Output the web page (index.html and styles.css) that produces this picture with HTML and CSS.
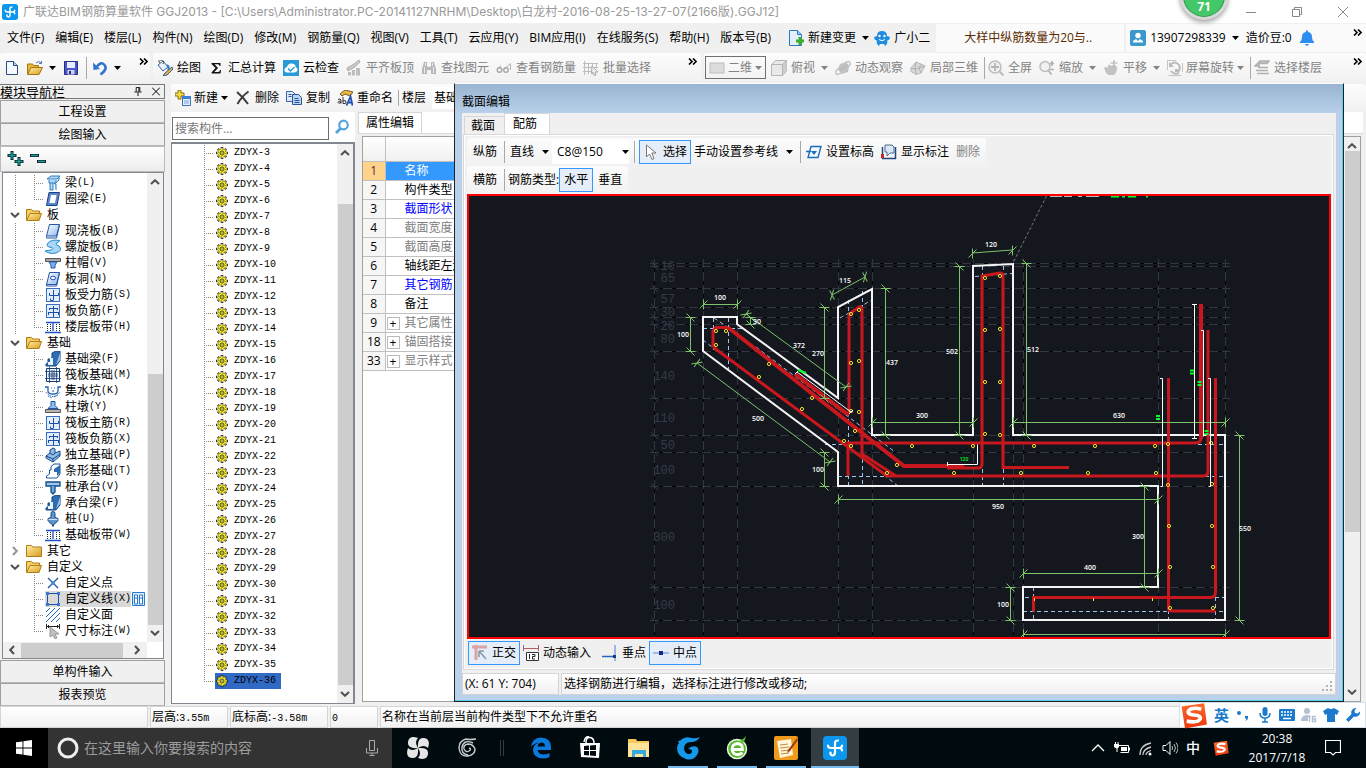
FILE: index.html
```html
<!DOCTYPE html>
<html lang="zh-CN">
<head>
<meta charset="utf-8">
<title>广联达BIM钢筋算量软件 GGJ2013</title>
<link rel="stylesheet" href="styles.css">
</head>
<body>
<svg class="defs" aria-hidden="true">
  <defs>
    <linearGradient id="gFold" x1="0" y1="0" x2="1" y2="1"><stop offset="0" stop-color="#fff0a8"/><stop offset="1" stop-color="#d99a1c"/></linearGradient>
    <linearGradient id="gBlue" x1="0" y1="0" x2="1" y2="1"><stop offset="0" stop-color="#ffffff"/><stop offset="1" stop-color="#8db8ee"/></linearGradient>
    <linearGradient id="gOrange" x1="0" y1="0" x2="0" y2="1"><stop offset="0" stop-color="#ff6a2e"/><stop offset="1" stop-color="#e8380d"/></linearGradient>
  </defs>
  <symbol id="caret" viewBox="0 0 7 4"><path d="M0 0h7L3.500 4z" fill="currentColor"/></symbol>
  <symbol id="more" viewBox="0 0 9 7"><path d="M1 .5 4 3.500 1 6.500M5 .5 8 3.500 5 6.500" fill="none" stroke="currentColor" stroke-width="1.600"/></symbol>
  <symbol id="up" viewBox="0 0 10 6"><path d="M1 5 5 1.200 9 5" fill="none" stroke="#505050" stroke-width="2"/></symbol>
  <symbol id="down" viewBox="0 0 10 6"><path d="M1 1 5 4.800 9 1" fill="none" stroke="#505050" stroke-width="2"/></symbol>
  <symbol id="left" viewBox="0 0 6 10"><path d="M5 1 1.200 5 5 9" fill="none" stroke="#505050" stroke-width="2"/></symbol>
  <symbol id="right" viewBox="0 0 6 10"><path d="M1 1 4.800 5 1 9" fill="none" stroke="#505050" stroke-width="2"/></symbol>
  <symbol id="app" viewBox="0 0 24 24"><rect width="24" height="24" rx="4" fill="#0d96ee"/><path d="M12 9V7q0-2.500 3-2.500M12 8v8q0 3.500-2.500 3.500Q7 19 7.500 16.500M5 9.500q0 2.500 3 2.500h8q3 0 3 2.500M19 9.500q0 2.500-3 2.500" fill="none" stroke="#fff" stroke-width="2.200" stroke-linecap="round"/></symbol>
  <symbol id="newfile" viewBox="0 0 16 16"><path d="M2.500 1.500h7l4 4v9h-11z" fill="#f4f8ff" stroke="#2c4a7c"/><path d="M9.500 1.500v4h4" fill="#b8cff0" stroke="#2c4a7c"/></symbol>
  <symbol id="open" viewBox="0 0 16 16"><path d="M.5 14V4h5l1 1.500h5V8" fill="#e6b83a" stroke="#a87410"/><path d="M.5 14.500 4 7.500h11.500L12 14.500z" fill="url(#gFold)" stroke="#a87410"/><path d="M9 3q3-3 5 0m.5-2v2.500H12" fill="none" stroke="#4a78b0"/></symbol>
  <symbol id="save" viewBox="0 0 16 16"><path d="M1.500 1.500h13v13h-13z" fill="#4b57c8" stroke="#262e8c"/><path d="M4 2h8v6H4z" fill="#e8ecff"/><path d="M4.500 10h7v4.500h-7z" fill="#cfd4e8"/><path d="M6 11h2v3H6z" fill="#262e8c"/></symbol>
  <symbol id="undo" viewBox="0 0 16 16"><path d="M5 6.500Q9 1 12.500 5t-4 9.500" fill="none" stroke="#3272d2" stroke-width="2.600"/><path d="M1 2.500 8 9 1.500 10z" fill="#3272d2"/></symbol>
  <symbol id="draw" viewBox="0 0 16 16"><path d="m1 5 5-4 5 6-5 4z" fill="#e9f1fb" stroke="#3a5f94"/><path d="M3 3q-3-3 1-3t2 4" fill="none" stroke="#444"/><path d="M10 5q3 2 1 5" fill="none" stroke="#2b7fd6" stroke-width="2"/><path d="m15 7-7 6-2 3 4-1 6-6z" fill="#e6b23a" stroke="#375c92"/></symbol>
  <symbol id="sigma" viewBox="0 0 16 16"><path d="M3.500 3h9v3h-1q0-1.800-1.500-1.800H6.500L10 8l-3.700 4H10q2 0 2-2h1l-.5 3.500h-9v-1L7.500 8 3.500 4z" fill="#111"/></symbol>
  <symbol id="cloud" viewBox="0 0 16 16"><rect width="16" height="16" fill="#2a9ad6"/><path d="M4 12.500q-3-.5-2.500-3T4 7q1-4 5-3.500T12.500 7Q15 8 14.500 10t-3 2.500z" fill="#fff"/><path d="m5 8.500 2.500 2.500L11.500 7" fill="none" stroke="#2a9ad6" stroke-width="1.500"/></symbol>
  <symbol id="align" viewBox="0 0 16 16"><path d="M1 8 8 4l5-4 1 2-5 5-7 4z" fill="#c9c9c9" stroke="#b0b0b0"/><path d="M2 12h3v3.500H2zM6 10h3v5.500H6zM10 8h4v7.500h-4z" fill="#bdbdbd"/></symbol>
  <symbol id="find" viewBox="0 0 16 16"><path d="M3 2h3v4l1 1h2l1-1V2h3l2 7v5h-5v-4H6v4H1V9z" fill="#b8b8b8"/><path d="M3.500 7v6M12.500 7v6M4.500 3v3M11.500 3v3" stroke="#ececec"/></symbol>
  <symbol id="glasses" viewBox="0 0 16 16"><path d="M1 9 5 5.500M8.500 9 14.500 3.500V10" fill="none" stroke="#b0b0b0"/><circle cx="3.500" cy="10" r="2.300" fill="none" stroke="#a8a8a8" stroke-width="1.400"/><circle cx="10" cy="10" r="2.300" fill="none" stroke="#a8a8a8" stroke-width="1.400"/></symbol>
  <symbol id="batch" viewBox="0 0 16 16"><path d="M1.500 1v14M5.500 3v11M9.500 3v11M13.500 3v4M0 3.500h15M0 7.500h15M0 11.500h9" stroke="#bdbdbd" fill="none"/><path d="m9 6 6 6h-3l1 3-2 .5-1-3-1.500 1z" fill="#eee" stroke="#a8a8a8"/></symbol>
  <symbol id="plane2d" viewBox="0 0 16 16"><rect x="1" y="3" width="14" height="10" fill="#dcdcdc" stroke="#bdbdbd"/></symbol>
  <symbol id="cube" viewBox="0 0 16 16"><path d="M.5 4.500 4.500.5h11v11l-4 4H.5z" fill="#e8e8e8" stroke="#b5b5b5"/><path d="m11.500 4.500 4-4v11l-4 4z" fill="#cdcdcd"/><path d="M.5 4.500h11v11M11.500 4.500l4-4" fill="none" stroke="#b5b5b5"/></symbol>
  <symbol id="orbit" viewBox="0 0 16 16"><path d="m5 4 6-2 3 4-1 6-7 2-3-5z" fill="#bdbdbd"/><ellipse cx="8" cy="8" rx="9" ry="3" transform="rotate(-40 8 8)" fill="none" stroke="#c8c8c8" stroke-width="1.500"/></symbol>
  <symbol id="part3d" viewBox="0 0 16 16"><path d="m1 8 5-6 5 2 4 2-4 7-5 1.500-5-3z" fill="#d8d8d8" stroke="#b8b8b8"/><path d="m6 2-1 6 1 6M11 4 9 8l2 5M1 8l4 1 4-1 6-2" fill="none" stroke="#b0b0b0"/></symbol>
  <symbol id="full" viewBox="0 0 16 16"><circle cx="7" cy="7" r="6" fill="#f0f0f0" stroke="#bdbdbd" stroke-width="1.500"/><path d="M7 3v8M3 7h8M11.500 11.500l4 4" stroke="#b5b5b5" stroke-width="1.800"/></symbol>
  <symbol id="zoomi" viewBox="0 0 16 16"><circle cx="6" cy="6.500" r="5" fill="#f0f0f0" stroke="#bdbdbd" stroke-width="1.500"/><path d="m9.500 10.500 3 4M13 1v5M11 3.500h4M11 9.500h4" stroke="#b0b0b0" stroke-width="1.600"/></symbol>
  <symbol id="pan" viewBox="0 0 16 16"><path d="M1 8q2-2 4 0V5q2-1 3 1 4-2 6 1 0 6-3 8H5q-3-3-4-7z" fill="#c2c2c2"/><path d="M11 0v7M7.500 3h7" stroke="#b0b0b0" stroke-width="1.200"/></symbol>
  <symbol id="rotate" viewBox="0 0 16 16"><path d="M.5 10V.5h9M1.500 15.500h13M15.500 3v9" fill="none" stroke="#c4c4c4"/><path d="M3 5q5-5 9 0 2 4-1 7M12 13q-5 2-8-2" fill="none" stroke="#bababa" stroke-width="2"/><path d="M2 2v5h5zM8 9h3v3H8z" fill="#bababa"/></symbol>
  <symbol id="floors" viewBox="0 0 16 16"><path d="m1 6 5-5h9l-2 2.500H5V6zM4 7.500h10M2 10.500h12M3 13.500h12" fill="#c4c4c4" stroke="#b0b0b0" stroke-width="1.500"/></symbol>
  <symbol id="change" viewBox="0 0 16 16"><path d="M1.500.500h8l4 4v11h-12z" fill="#e3f0fc" stroke="#2a78c0"/><path d="M9.500.500v4h4" fill="#9cc5ee" stroke="#2a78c0"/><path d="M8 9.500h2.500V7h3v2.500H16v3h-2.500V15h-3v-2.500H8z" fill="#3fae2c"/></symbol>
  <symbol id="robot" viewBox="0 0 16 16"><path d="M3 6q0-5 5-5t5 5l3 1-1 3h-1.500L13 14l-2 2-1-2H6l-1 2-2-2-.5-4H1L0 7z" fill="#1e8ce0"/><circle cx="5.500" cy="6" r="1.200" fill="#fff"/><circle cx="10.500" cy="6" r="1.200" fill="#fff"/><path d="M5 9.500q3 2.500 6 0" stroke="#fff" fill="none"/></symbol>
  <symbol id="user" viewBox="0 0 16 16"><rect width="16" height="16" rx="2" fill="#3a99cc"/><circle cx="8" cy="5.500" r="2.700" fill="#fff"/><path d="M3 12.500V11l3-2 2 2 2-2 3 2v1.500z" fill="#fff"/></symbol>
  <symbol id="bell" viewBox="0 0 16 16"><path d="M7 .5h2V2q4 .5 4 5 0 3 2 5v1H1v-1q2-2 2-5 0-4.500 4-5zM5.500 14h5L8 16z" fill="#2d8cf0"/></symbol>
  <symbol id="add" viewBox="0 0 16 16"><path d="M3 0h3v3h3v3H6v3H3V6H0V3h3z" fill="#f5d94a" stroke="#8a7010"/><path d="M7.500 6.500h8v9h-8z" fill="#e8f1fc" stroke="#3a6fb8"/><path d="M7 6h9v3H7z" fill="#3a7fd8"/><path d="M9 11h5M9 13h5" stroke="#6fa3e0"/></symbol>
  <symbol id="del" viewBox="0 0 16 16"><path d="M2 2q6 5 11 12M13.500 1.500Q7 6 2.500 14" fill="none" stroke="#3c3c3c" stroke-width="2"/></symbol>
  <symbol id="copy" viewBox="0 0 16 16"><path d="M.5 1.500h6l3 3v7h-9z" fill="#dce9fa" stroke="#3a66a8"/><path d="M6.500 4.500h6l3 3v7h-9z" fill="#b9d4f6" stroke="#2c5596"/><path d="M8.500 8.500h4M8.500 10.500h5M8.500 12.500h5M2.500 4.500h3M2.500 6.500h3" stroke="#2c5596"/></symbol>
  <symbol id="rename" viewBox="0 0 16 16"><path d="m3 4 5-4 8 2-3 4-5-2-3 2z" fill="#e8b848" stroke="#7a5a18"/><path d="M1 9.500q3-1.500 3 1v3M4 11q-3 0-3 1.500t3 0M6 7v6.500q3 1 3-1.500T6 11" fill="none" stroke="#333"/><path d="m9.500 15.500 4-9 2 9M11 12.500h4" fill="none" stroke="#2050b0" stroke-width="1.800"/></symbol>
  <symbol id="mag" viewBox="0 0 16 16"><circle cx="9.500" cy="6" r="4.300" fill="#fff" stroke="#55a5e0" stroke-width="2.200"/><path d="M6.500 9.500 2 14" stroke="#55a5e0" stroke-width="3"/></symbol>
  <symbol id="gear" viewBox="0 0 12 12"><path d="M6 0v12M0 6h12M1.800 1.800l8.400 8.400M10.200 1.800l-8.400 8.400" stroke="#333" stroke-width="2.600"/><circle cx="6" cy="6" r="4.300" fill="#f3ea20"/><path d="M6 1v10M1 6h10M2.500 2.500l7 7M9.500 2.500l-7 7" stroke="#f3ea20" stroke-width="1.400"/><circle cx="6" cy="6" r="2" fill="#f5ee30" stroke="#444"/><circle cx="6" cy="6" r="3.800" fill="none" stroke="#444" stroke-dasharray="1 2" stroke-width=".8"/><rect x="5.500" y="5.500" width="1" height="1" fill="#222"/></symbol>
  <symbol id="fopen" viewBox="0 0 16 16"><path d="M.5 13V2.500h5L7 4h6.500v3" fill="#f3cf62" stroke="#b07c14"/><path d="M.5 13.500 4 6.500h11.500L13 13.500z" fill="url(#gFold)" stroke="#b07c14"/></symbol>
  <symbol id="fclosed" viewBox="0 0 16 16"><path d="M.5 13.500v-11h5L7 4h8.500v9.500z" fill="url(#gFold)" stroke="#b07c14"/></symbol>
  <symbol id="beam" viewBox="0 0 16 16"><path d="m2 4 4-3h9l-3 3zM4 5v3h7V5M5 8v7h3V8M11 8l3-3v-3M9 8l2 1v6" fill="#b9d4f4" stroke="#2b82c4"/></symbol>
  <symbol id="ring" viewBox="0 0 16 16"><path d="M4 1.500h10.500L12 14.500H1.500z" fill="#5a86cc" stroke="#1a3f86"/><path d="M6 4h5.500L10 12H4.500z" fill="#fff"/></symbol>
  <symbol id="slab" viewBox="0 0 16 16"><path d="M4.500 1.500h10L11.500 13h-10z" fill="url(#gBlue)" stroke="#2455a6"/><path d="M1.500 13.500v1.500h10l3-13" fill="none" stroke="#2455a6"/></symbol>
  <symbol id="spiral" viewBox="0 0 16 16"><path d="M15 1.500Q6 0 3 4t4 4.500q2 1-1 2.500l-6 1q6 4 12 1.500t2-6.500Q9 5 12 4z" fill="#a7d6f6" stroke="#1f8bd0"/></symbol>
  <symbol id="cap" viewBox="0 0 16 16"><path d="M.5 3.500h15v3H.5z" fill="#a8a8a8" stroke="#555"/><path d="M4 7h8l-2 3v3H6v-3z" fill="#7db4ee" stroke="#1e5aa8"/></symbol>
  <symbol id="hole" viewBox="0 0 16 16"><path d="M4.500 1.500h10L11.500 13.500h-10z" fill="url(#gBlue)" stroke="#2455a6"/><path d="M1.500 13.500v1.500h10l3-13" fill="none" stroke="#2455a6"/><ellipse cx="8" cy="7" rx="2.500" ry="1.800" fill="#fff" stroke="#1a4ac0"/></symbol>
  <symbol id="rebar" viewBox="0 0 16 16"><rect x="1.500" y="1.500" width="13" height="13" fill="#e2ecfa" stroke="#3a70c0"/><path d="M8.500 3v10.500M4.500 6v2.500h9V6M8 13.500H5.500v-2" fill="none" stroke="#1c50a8"/></symbol>
  <symbol id="rebar2" viewBox="0 0 16 16"><rect x="1.500" y="1.500" width="13" height="13" fill="#e2ecfa" stroke="#3a70c0"/><path d="M8.500 3v11M4 5.500h9M3 9.500h11M4.500 5v2M12.500 5v2M3.500 10v2M13.500 10v2" fill="none" stroke="#1c50a8"/></symbol>
  <symbol id="strip" viewBox="0 0 16 16"><path d="M1 3.500h4M11 3.500h4M5 3.500h6M0 13.500h16M8 4v8" stroke="#1c50c8" stroke-width="1.300"/><path d="M2.500 5v7M5.500 5v7M11.500 5v7M14.500 5v7" stroke="#222" stroke-dasharray="1 1"/></symbol>
  <symbol id="fbeam" viewBox="0 0 16 16"><path d="M7 6V2l4-2h4v10l-4 5H1v-2l2-1V8h3z" fill="#2d6cb0" stroke="#17457c"/><path d="M3 14v-3h2V7h3v7z" fill="#e8f2fd"/><path d="m11 14 4-5V2" fill="#9cc2ea"/></symbol>
  <symbol id="raft" viewBox="0 0 16 16"><path d="M1.500 1.500h13v13h-13z" fill="#e8f1fa" stroke="#173c70"/><path d="M4.500 0v16M11.500 0v16M0 4.500h16M0 11.500h16M7 3v10M9 3v10M3 7h10M3 9h10" stroke="#173c70" stroke-width=".8"/></symbol>
  <symbol id="pit" viewBox="0 0 16 16"><path d="M0 4h3v4q0 3 5 3t5-3V4h3" fill="none" stroke="#1f5fb4" stroke-width="1.300"/><path d="M1 9q7 9 14 0M3 13l4 2M9 14l4-2" fill="none" stroke="#1f5fb4" stroke-dasharray="1.500 1"/><path d="M6 5h1M9 5h1M7 8h2" stroke="#1f5fb4"/></symbol>
  <symbol id="pier" viewBox="0 0 16 16"><path d="M6 2.500h4v4l3 3H3l3-3z" fill="#8ebdf0" stroke="#1e5aa8"/><path d="M.5 10.500h15v3H.5z" fill="#b5b5b5" stroke="#555"/></symbol>
  <symbol id="found" viewBox="0 0 16 16"><path d="m1 9 4-3V3l3-2 2 1v4l5-2v5l-7 6-7-4z" fill="#8fbbe8" stroke="#174a86"/><path d="m1 9 7 3 7-5M8 12v3M5 6l3 2 2-2" fill="none" stroke="#174a86"/></symbol>
  <symbol id="footing" viewBox="0 0 16 16"><path d="M6 3.500 9 1h6v10l-3 4H1.500v-2l3-2V7H6z" fill="#fff" stroke="#1c58a0"/><path d="M9 6l6-4v8l-3 3V9H9z" fill="#2d6cb0"/></symbol>
  <symbol id="pilecap" viewBox="0 0 16 16"><path d="M1 3h14v4H1z" fill="#9cc8ee" stroke="#134b86" stroke-width="1.300"/><path d="M6 7v6l2 2 2-2V7" fill="#6da9dc" stroke="#134b86" stroke-width="1.300"/></symbol>
  <symbol id="pile" viewBox="0 0 16 16"><path d="M8 .5q2 0 2 2v4l3 1v2q-2 3-3.500 3L8 15.500 6.500 12.500Q5 12.500 3 9.500v-2l3-1v-4q0-2 2-2z" fill="#5f95cc" stroke="#174a86"/><path d="M3.500 8.500h9" stroke="#cfe4f8"/></symbol>
  <symbol id="cpoint" viewBox="0 0 16 16"><path d="m3 3 10 10M13 3 3 13" stroke="#1c50a8" stroke-width="1.200"/><circle cx="8" cy="8" r="2" fill="#4a90e0"/></symbol>
  <symbol id="cline" viewBox="0 0 16 16"><path d="M2.500 2.500h11v11h-11z" fill="none" stroke="#1c50a8"/><path d="M1 1h3v3H1zM12 1h3v3h-3zM1 12h3v3H1zM12 12h3v3h-3z" fill="#3a78d0"/></symbol>
  <symbol id="cface" viewBox="0 0 16 16"><path d="M1 5 5 1M1 10 10 1M1 15 15 1M6 15l9-9M11 15l4-4" stroke="#2468c0"/></symbol>
  <symbol id="dimen" viewBox="0 0 16 16"><path d="M1.500 1v5M14.500 1v5M1 3.500h14M3.500 2v3M12.500 2v3" stroke="#222"/><path d="m5 4 9 7h-4l2 4-2 1-2-4-3 2z" fill="#c0c0c0" stroke="#999"/></symbol>
  <symbol id="arrow" viewBox="0 0 16 16"><path d="M3.500 1v12l3-3 2.500 5.500 2-1L8.800 9H13z" fill="#fff" stroke="#777"/></symbol>
  <symbol id="level" viewBox="0 0 16 16"><path d="M5 2.500h10l-3 11H2zM0 7.500h5" fill="#f2f8ff" stroke="#1c6cb8" stroke-width="1.400"/><path d="M5 7h6L8 11z" fill="#1c6cb8"/></symbol>
  <symbol id="showdim" viewBox="0 0 16 16"><path d="M1.500 3v12M14.500 3v12M1 14.500h14" stroke="#23477c" stroke-width="1.500"/><path d="M4 1h7l2 2v6H9l-3 3V8H4z" fill="#dbe7f6" stroke="#4c6a94"/><path d="M0 10h3v4H0z" fill="#c62828"/></symbol>
  <symbol id="ortho" viewBox="0 0 16 16"><path d="M0 2h15M4 0v15" stroke="#dba4a4" stroke-width="3"/><path d="m7 6 7 8M7 6v6M7 6h5" stroke="#8899a8" stroke-width="1.600"/></symbol>
  <symbol id="dyn" viewBox="0 0 16 16"><path d="M.5 0v6M15.500 0v6M0 3.500h16" stroke="#b06060"/><path d="M3.500 7.500h12v8h-12z" fill="#fff" stroke="#333"/><path d="M6.500 9v5M9 9.500h3v2H9.500V14H12" fill="none" stroke="#222"/></symbol>
  <symbol id="perp" viewBox="0 0 16 16"><path d="M13 0v16" stroke="#9cb8e0" stroke-width="2"/><path d="M0 11.500h13" stroke="#2466b8" stroke-width="1.500"/><rect x="11" y="10" width="3" height="3" fill="#103a8c"/></symbol>
  <symbol id="mid" viewBox="0 0 16 16"><path d="M0 8h16" stroke="#8aa8d4" stroke-width="1.500"/><rect x="6" y="6" width="4" height="4" fill="#10288c"/></symbol>
  <symbol id="sogou" viewBox="0 0 24 24"><path d="m1 4 20-3 2.500 19L4 23.500z" fill="url(#gOrange)"/><path d="M18.500 6.500Q10 4 7 8q-1 3 5 3.500 6.500.5 5.500 3.500-2.500 4-12 2" fill="none" stroke="#fff" stroke-width="3.200"/></symbol>
</svg>

<header class="titlebar">
  <svg class="i16"><use href="#app"/></svg>
  <h1>广联达BIM钢筋算量软件 GGJ2013 - [C:\Users\Administrator.PC-20141127NRHM\Desktop\白龙村-2016-08-25-13-27-07(2166版).GGJ12]</h1>
  <div class="winbtns">
    <button aria-label="最小化"><svg viewBox="0 0 10 10"><path d="M0 5.500h10"/></svg></button>
    <button aria-label="还原"><svg viewBox="0 0 10 10"><path d="M.5 2.500h7v7h-7zM2.500 2.500v-2h7v7h-2"/></svg></button>
    <button aria-label="关闭"><svg viewBox="0 0 10 10"><path d="m0 0 10 10M10 0 0 10"/></svg></button>
  </div>
</header>
<div class="ball">71</div>

<nav class="menubar">
  <div class="menus">
    <button>文件(F)</button><button>编辑(E)</button><button>楼层(L)</button><button>构件(N)</button><button>绘图(D)</button><button>修改(M)</button><button>钢筋量(Q)</button><button>视图(V)</button><button>工具(T)</button><button>云应用(Y)</button><button>BIM应用(I)</button><button>在线服务(S)</button><button>帮助(H)</button><button>版本号(B)</button>
  </div>
  <div class="extras">
    <button class="tool"><svg class="i16"><use href="#change"/></svg>新建变更<svg class="caret"><use href="#caret"/></svg></button>
    <button class="tool"><svg class="i16"><use href="#robot"/></svg>广小二</button>
  </div>
  <a class="notice" href="#">大样中纵筋数量为20与..</a>
  <div class="account">
    <button class="tool"><svg class="i16"><use href="#user"/></svg>13907298339<svg class="caret"><use href="#caret"/></svg></button>
    <button class="tool">造价豆:0</button>
    <button class="tool" aria-label="通知"><svg class="i16"><use href="#bell"/></svg></button>
    <svg class="more"><use href="#more"/></svg>
  </div>
</nav>

<div class="toolbars">
  <div class="bar files">
    <button class="tool" aria-label="新建"><svg class="i16"><use href="#newfile"/></svg></button>
    <button class="tool" aria-label="打开"><svg class="i16"><use href="#open"/></svg><svg class="caret"><use href="#caret"/></svg></button>
    <button class="tool" aria-label="保存"><svg class="i16"><use href="#save"/></svg></button>
    <i class="sep"></i>
    <button class="tool" aria-label="撤销"><svg class="i16"><use href="#undo"/></svg><svg class="caret"><use href="#caret"/></svg></button>
    <svg class="more"><use href="#more"/></svg>
  </div>
  <div class="bar edit">
    <button class="tool"><svg class="i16"><use href="#draw"/></svg>绘图</button>
    <button class="tool"><svg class="i16"><use href="#sigma"/></svg>汇总计算</button>
    <button class="tool"><svg class="i16"><use href="#cloud"/></svg>云检查</button>
    <button class="tool off"><svg class="i16"><use href="#align"/></svg>平齐板顶</button>
    <button class="tool off"><svg class="i16"><use href="#find"/></svg>查找图元</button>
    <button class="tool off"><svg class="i16"><use href="#glasses"/></svg>查看钢筋量</button>
    <button class="tool off"><svg class="i16"><use href="#batch"/></svg>批量选择</button>
    <svg class="more"><use href="#more"/></svg>
  </div>
  <div class="bar view off">
    <label class="dimpick"><svg class="i16"><use href="#plane2d"/></svg><select aria-label="视图维度"><option>二维</option></select><svg class="caret"><use href="#caret"/></svg></label>
    <button class="tool off"><svg class="i16"><use href="#cube"/></svg>俯视<svg class="caret"><use href="#caret"/></svg></button>
    <button class="tool off"><svg class="i16"><use href="#orbit"/></svg>动态观察</button>
    <button class="tool off"><svg class="i16"><use href="#part3d"/></svg>局部三维</button>
    <i class="sep"></i>
    <button class="tool off"><svg class="i16"><use href="#full"/></svg>全屏</button>
    <button class="tool off"><svg class="i16"><use href="#zoomi"/></svg>缩放<svg class="caret"><use href="#caret"/></svg></button>
    <button class="tool off"><svg class="i16"><use href="#pan"/></svg>平移<svg class="caret"><use href="#caret"/></svg></button>
    <button class="tool off tight"><svg class="i16"><use href="#rotate"/></svg>屏幕旋转<svg class="caret"><use href="#caret"/></svg></button>
    <i class="sep"></i>
    <button class="tool off"><svg class="i16"><use href="#floors"/></svg>选择楼层</button>
    <svg class="more"><use href="#more"/></svg>
  </div>
</div>

<main class="work">
  <aside class="nav">
    <div class="navhead"><span>模块导航栏</span>
      <button aria-label="固定"><svg viewBox="0 0 8 10"><path d="M2 5V.5h4V5M5 1v4M0 5.500h8M4 6v4" fill="none" stroke="#000"/></svg></button>
      <button aria-label="关闭"><svg viewBox="0 0 8 8"><path d="m0 0 8 8M8 0 0 8" stroke="#000"/></svg></button>
    </div>
    <button class="navbtn">工程设置</button>
    <button class="navbtn">绘图输入</button>
    <div class="navtools">
      <button aria-label="全部展开"><svg viewBox="0 0 18 16"><path d="M5 0v9M.5 4.500h9M12 6v9M7.500 10.500h9" stroke="#123" stroke-width="3"/><path d="M5 1v7M1.500 4.500h7M12 7v7M8.500 10.500h7" stroke="#12a090" stroke-width="1.400"/></svg></button>
      <button aria-label="全部折叠"><svg viewBox="0 0 18 16"><path d="M0 4.500h9M7 10.500h9" stroke="#123" stroke-width="3"/><path d="M1 4.500h7M8 10.500h7" stroke="#12a090" stroke-width="1.400"/></svg></button>
    </div>
    <div class="treebox">
      <div class="treemain">
        <div class="tree">
          <ul class="kids">
            <li><svg class="i16"><use href="#beam"/></svg>梁<kbd>(L)</kbd></li>
            <li><svg class="i16"><use href="#ring"/></svg>圈梁<kbd>(E)</kbd></li>
          </ul>
          <div class="cat"><svg class="exp"><use href="#down"/></svg><svg class="i16"><use href="#fopen"/></svg>板</div>
          <ul class="kids">
            <li><svg class="i16"><use href="#slab"/></svg>现浇板<kbd>(B)</kbd></li>
            <li><svg class="i16"><use href="#spiral"/></svg>螺旋板<kbd>(B)</kbd></li>
            <li><svg class="i16"><use href="#cap"/></svg>柱帽<kbd>(V)</kbd></li>
            <li><svg class="i16"><use href="#hole"/></svg>板洞<kbd>(N)</kbd></li>
            <li><svg class="i16"><use href="#rebar"/></svg>板受力筋<kbd>(S)</kbd></li>
            <li><svg class="i16"><use href="#rebar2"/></svg>板负筋<kbd>(F)</kbd></li>
            <li><svg class="i16"><use href="#strip"/></svg>楼层板带<kbd>(H)</kbd></li>
          </ul>
          <div class="cat"><svg class="exp"><use href="#down"/></svg><svg class="i16"><use href="#fopen"/></svg>基础</div>
          <ul class="kids">
            <li><svg class="i16"><use href="#fbeam"/></svg>基础梁<kbd>(F)</kbd></li>
            <li><svg class="i16"><use href="#raft"/></svg>筏板基础<kbd>(M)</kbd></li>
            <li><svg class="i16"><use href="#pit"/></svg>集水坑<kbd>(K)</kbd></li>
            <li><svg class="i16"><use href="#pier"/></svg>柱墩<kbd>(Y)</kbd></li>
            <li><svg class="i16"><use href="#rebar"/></svg>筏板主筋<kbd>(R)</kbd></li>
            <li><svg class="i16"><use href="#rebar2"/></svg>筏板负筋<kbd>(X)</kbd></li>
            <li><svg class="i16"><use href="#found"/></svg>独立基础<kbd>(P)</kbd></li>
            <li><svg class="i16"><use href="#footing"/></svg>条形基础<kbd>(T)</kbd></li>
            <li><svg class="i16"><use href="#pilecap"/></svg>桩承台<kbd>(V)</kbd></li>
            <li><svg class="i16"><use href="#fbeam"/></svg>承台梁<kbd>(F)</kbd></li>
            <li><svg class="i16"><use href="#pile"/></svg>桩<kbd>(U)</kbd></li>
            <li><svg class="i16"><use href="#strip"/></svg>基础板带<kbd>(W)</kbd></li>
          </ul>
          <div class="cat"><svg class="exp shut"><use href="#right"/></svg><svg class="i16"><use href="#fclosed"/></svg>其它</div>
          <div class="cat"><svg class="exp"><use href="#down"/></svg><svg class="i16"><use href="#fopen"/></svg>自定义</div>
          <ul class="kids last">
            <li><svg class="i16"><use href="#cpoint"/></svg>自定义点</li>
            <li class="cur"><span><svg class="i16"><use href="#cline"/></svg>自定义线<kbd>(X)</kbd></span><svg class="book" viewBox="0 0 13 14"><path d="M.5.500h12v13H.5z" fill="#d6ebff" stroke="#2a7ac8"/><path d="M2.500 3h3v9h-3zM7.500 3h3v9h-3zM2.500 6h3M7.500 6h3" fill="#fff" stroke="#2a7ac8"/></svg></li>
            <li><svg class="i16"><use href="#cface"/></svg>自定义面</li>
            <li><svg class="i16"><use href="#dimen"/></svg>尺寸标注<kbd>(W)</kbd></li>
          </ul>
        </div>
        <div class="vscroll nav-v"><svg><use href="#up"/></svg><i></i><svg><use href="#down"/></svg></div>
      </div>
      <div class="hscroll"><svg><use href="#left"/></svg><i></i><svg><use href="#right"/></svg></div>
    </div>
    <button class="navbtn">单构件输入</button>
    <button class="navbtn">报表预览</button>
  </aside>

  <section class="doc">
    <div class="bar comps">
      <button class="tool tight"><svg class="i16"><use href="#add"/></svg>新建<svg class="caret"><use href="#caret"/></svg></button>
      <button class="tool"><svg class="i16"><use href="#del"/></svg>删除</button>
      <button class="tool"><svg class="i16"><use href="#copy"/></svg>复制</button>
      <button class="tool"><svg class="i16"><use href="#rename"/></svg>重命名</button>
      <i class="sep"></i>
      <label class="floor">楼层<select><option>基础层</option></select></label>
    </div>
    <div class="panes">
      <div class="list">
        <div class="search"><input type="text" placeholder="搜索构件…" aria-label="搜索构件"><button aria-label="搜索"><svg class="i16"><use href="#mag"/></svg></button></div>
        <div class="items">
          <ul>
            <li><svg><use href="#gear"/></svg><span>ZDYX-3</span></li>
            <li><svg><use href="#gear"/></svg><span>ZDYX-4</span></li>
            <li><svg><use href="#gear"/></svg><span>ZDYX-5</span></li>
            <li><svg><use href="#gear"/></svg><span>ZDYX-6</span></li>
            <li><svg><use href="#gear"/></svg><span>ZDYX-7</span></li>
            <li><svg><use href="#gear"/></svg><span>ZDYX-8</span></li>
            <li><svg><use href="#gear"/></svg><span>ZDYX-9</span></li>
            <li><svg><use href="#gear"/></svg><span>ZDYX-10</span></li>
            <li><svg><use href="#gear"/></svg><span>ZDYX-11</span></li>
            <li><svg><use href="#gear"/></svg><span>ZDYX-12</span></li>
            <li><svg><use href="#gear"/></svg><span>ZDYX-13</span></li>
            <li><svg><use href="#gear"/></svg><span>ZDYX-14</span></li>
            <li><svg><use href="#gear"/></svg><span>ZDYX-15</span></li>
            <li><svg><use href="#gear"/></svg><span>ZDYX-16</span></li>
            <li><svg><use href="#gear"/></svg><span>ZDYX-17</span></li>
            <li><svg><use href="#gear"/></svg><span>ZDYX-18</span></li>
            <li><svg><use href="#gear"/></svg><span>ZDYX-19</span></li>
            <li><svg><use href="#gear"/></svg><span>ZDYX-20</span></li>
            <li><svg><use href="#gear"/></svg><span>ZDYX-21</span></li>
            <li><svg><use href="#gear"/></svg><span>ZDYX-22</span></li>
            <li><svg><use href="#gear"/></svg><span>ZDYX-23</span></li>
            <li><svg><use href="#gear"/></svg><span>ZDYX-24</span></li>
            <li><svg><use href="#gear"/></svg><span>ZDYX-25</span></li>
            <li><svg><use href="#gear"/></svg><span>ZDYX-26</span></li>
            <li><svg><use href="#gear"/></svg><span>ZDYX-27</span></li>
            <li><svg><use href="#gear"/></svg><span>ZDYX-28</span></li>
            <li><svg><use href="#gear"/></svg><span>ZDYX-29</span></li>
            <li><svg><use href="#gear"/></svg><span>ZDYX-30</span></li>
            <li><svg><use href="#gear"/></svg><span>ZDYX-31</span></li>
            <li><svg><use href="#gear"/></svg><span>ZDYX-32</span></li>
            <li><svg><use href="#gear"/></svg><span>ZDYX-33</span></li>
            <li><svg><use href="#gear"/></svg><span>ZDYX-34</span></li>
            <li><svg><use href="#gear"/></svg><span>ZDYX-35</span></li>
            <li class="cur"><span><svg><use href="#gear"/></svg>ZDYX-36</span></li>
          </ul>
          <div class="vscroll list-v"><svg><use href="#up"/></svg><i></i><svg><use href="#down"/></svg></div>
        </div>
      </div>
      <div class="props">
        <div class="tabs"><button class="tab on">属性编辑</button></div>
        <div class="grid">
          <table>
            <thead><tr><th></th><td></td><td></td></tr></thead>
            <tbody>
              <tr class="cur"><th>1</th><td>名称</td><td></td></tr>
              <tr><th>2</th><td>构件类型</td><td></td></tr>
              <tr class="key"><th>3</th><td>截面形状</td><td></td></tr>
              <tr class="dim"><th>4</th><td>截面宽度</td><td></td></tr>
              <tr class="dim"><th>5</th><td>截面高度</td><td></td></tr>
              <tr><th>6</th><td>轴线距左边</td><td></td></tr>
              <tr class="key"><th>7</th><td>其它钢筋</td><td></td></tr>
              <tr><th>8</th><td>备注</td><td></td></tr>
              <tr class="dim grp"><th>9</th><td><button aria-label="展开">+</button>其它属性</td><td></td></tr>
              <tr class="dim grp"><th>18</th><td><button aria-label="展开">+</button>锚固搭接</td><td></td></tr>
              <tr class="dim grp"><th>33</th><td><button aria-label="展开">+</button>显示样式</td><td></td></tr>
            </tbody>
          </table>
          <div class="vscroll grid-v"><svg><use href="#up"/></svg><i></i><svg><use href="#down"/></svg></div>
        </div>
      </div>
    </div>
  </section>

  <section class="dialog" role="dialog" aria-label="截面编辑">
    <h2>截面编辑</h2>
    <div class="client">
      <div class="tabs dtabs"><button class="tab">截面</button><button class="tab on">配筋</button></div>
      <div class="page">
        <div class="bar row1">
          <button class="tool">纵筋</button><i class="sep"></i>
          <button class="tool">直线<svg class="caret"><use href="#caret"/></svg></button>
          <label class="combo"><select aria-label="钢筋规格"><option>C8@150</option></select><svg class="caret"><use href="#caret"/></svg></label>
          <i class="sep"></i>
          <button class="tool on"><svg class="i16"><use href="#arrow"/></svg>选择</button>
          <button class="tool">手动设置参考线<svg class="caret"><use href="#caret"/></svg></button>
          <i class="sep"></i>
          <button class="tool"><svg class="i16"><use href="#level"/></svg>设置标高</button>
          <button class="tool"><svg class="i16"><use href="#showdim"/></svg>显示标注</button>
          <button class="tool off">删除</button>
        </div>
        <div class="bar row2">
          <button class="tool">横筋</button><i class="sep"></i><span>钢筋类型:</span>
          <button class="tool on">水平</button><button class="tool">垂直</button>
        </div>
        <svg class="canvas" viewBox="469 196 860 441" preserveAspectRatio="xMidYMid slice" role="img" aria-label="截面配筋图">
          <defs>
            <g id="tick"><path d="M0-5V5M-4 4 4-4"/></g>
            <circle id="dot" r="1.600"/>
            <path id="axes" d="M650 263.500h580M650 266.500h580M650 288.500h580M650 307.500h580M650 317.500h580M650 324.500h580M650 351.500h580M650 398.500h580M650 435.500h580M650 452.500h580M650 486.500h580M650 587.500h580M650 620.500h580M654.500 259v378M703.500 259v378M737.500 259v378M838.500 259v378M872.500 259v378M973.500 259v378M1013.500 259v378M1023.500 259v378M1158.500 259v378M1225.500 259v378"/>
          </defs>
          <use href="#axes" class="axisbase"/>
          <use href="#axes" class="axis"/>
          <path class="axistick" d="m651 260 7 7m-7-4 7 7m-7 15 7 7m-7 12 7 7m-7 3 7 7m-7 0 7 7m-7 20 7 7m-7 40 7 7m-7 30 7 7m-7 10 7 7m-7 27 7 7m-7 94 7 7m-7 26 7 7"/>
          <g class="axistext"><text x="675" y="270">10</text><text x="675" y="282">65</text><text x="675" y="303">57</text><text x="675" y="316">30</text><text x="675" y="330">20</text><text x="675" y="343">80</text><text x="675" y="380">140</text><text x="675" y="422">110</text><text x="675" y="449">50</text><text x="675" y="474">100</text><text x="675" y="541">300</text><text x="675" y="609">100</text></g>
          <path class="cover" d="M713.500 318v34M728.500 318v52M703 328.500h42M703 340l9 7M714 318l18 12M756 347l139 105M848.500 300v186M862.500 291v195M840 318l32-18M825 444.500h25M838 476.500h62M884 475l14 11M982.500 266v220M1003.500 266v220M975 276.500l37-3M1198 444.500h27M1205 476.500h20M1033.500 587v33M1025 597.500h10M1023 611.500h202M1215.500 597v23M1168.500 610v10M1215 597.500h10"/>
          <path class="outline" d="M703 317h34v7l101 74v-91l34-18v146h101V266l40-2v171h212v185h-202v-33h135V486H838v-34L703 351z"/>
          <g class="bars">
            <path d="M713 347v-16l3-3.500h12M713 347l174 129h316q5 0 5-5V330M849 414V315l3-3 7-5q3-1 3 3v144l34 22M795 374l54 41M848 476v-33h347q6 0 6-5M947 468h31q4 0 4-4V276l18-3q3 0 3 3v191.500h66M1168.500 378v230q0 3 3 3h44M1215.500 378v214q0 5.500-5 5.500H1033.500v14"/>
            <path class="thick" d="m728 327.500 176 138.500h60M795 374l52 40M1201 439V304M947 467h17"/>
          </g>
          <g class="dots">
            <use href="#dot" x="716" y="331"/><use href="#dot" x="726" y="331"/><use href="#dot" x="716" y="345"/><use href="#dot" x="769" y="364"/><use href="#dot" x="759" y="377"/><use href="#dot" x="812" y="398"/><use href="#dot" x="802" y="409"/><use href="#dot" x="851" y="314"/><use href="#dot" x="859" y="310"/><use href="#dot" x="851" y="363"/><use href="#dot" x="859" y="361"/><use href="#dot" x="851" y="411"/><use href="#dot" x="859" y="412"/><use href="#dot" x="844" y="441"/><use href="#dot" x="851" y="446"/><use href="#dot" x="855" y="431"/><use href="#dot" x="912" y="446"/><use href="#dot" x="897" y="465"/><use href="#dot" x="887" y="473"/>
            <use href="#dot" x="985" y="278"/><use href="#dot" x="1000" y="276"/><use href="#dot" x="985" y="330"/><use href="#dot" x="1000" y="329"/><use href="#dot" x="985" y="382"/><use href="#dot" x="1000" y="382"/><use href="#dot" x="985" y="434"/><use href="#dot" x="1000" y="435"/><use href="#dot" x="973" y="446"/><use href="#dot" x="1034" y="446"/><use href="#dot" x="1095" y="446"/><use href="#dot" x="1155" y="446"/><use href="#dot" x="1168" y="444"/><use href="#dot" x="1211" y="443"/><use href="#dot" x="954" y="473"/><use href="#dot" x="1021" y="473"/><use href="#dot" x="1088" y="473"/><use href="#dot" x="1156" y="473"/><use href="#dot" x="1168" y="485"/><use href="#dot" x="1212" y="484"/>
            <use href="#dot" x="1169" y="526"/><use href="#dot" x="1212" y="526"/><use href="#dot" x="1170" y="567"/><use href="#dot" x="1213" y="567"/><use href="#dot" x="1170" y="608"/><use href="#dot" x="1213" y="608"/>
            <path d="M1034.500 598v3M1093.500 598v3M1152.500 598v3"/>
          </g>
          <g class="dims">
            <path d="M703 304.500h34M690.500 317v34M750.500 318v6M746 314l100 73M697 363l133 99M824.500 307v91M832 295l33-18M885.500 289v146M872 422.500h101M824.500 452v34M838 499.500h320M959.500 266v169M972 253l40-3M1026.500 264v171M1013 422.500h212M1239.500 435v185M1144.500 486v101M1023 573.500h135M1010.500 587v33M1023 634.500h202"/>
            <use href="#tick" x="703.500" y="304.500"/><use href="#tick" x="737.500" y="304.500"/><use href="#tick" x="872.500" y="422.500"/><use href="#tick" x="973.500" y="422.500"/><use href="#tick" x="838.500" y="499.500"/><use href="#tick" x="1158.500" y="499.500"/><use href="#tick" x="1013.500" y="422.500"/><use href="#tick" x="1225.500" y="422.500"/><use href="#tick" x="1023.500" y="573.500"/><use href="#tick" x="1158.500" y="573.500"/><use href="#tick" x="1023.500" y="634.500"/><use href="#tick" x="1225.500" y="634.500"/><use href="#tick" x="972.500" y="253.500"/><use href="#tick" x="1012.500" y="250.500"/>
            <use href="#tick" transform="translate(690.500 317.500) rotate(90)"/><use href="#tick" transform="translate(690.500 351.500) rotate(90)"/><use href="#tick" transform="translate(750.500 317.500) rotate(90)"/><use href="#tick" transform="translate(750.500 324.500) rotate(90)"/><use href="#tick" transform="translate(824.500 307.500) rotate(90)"/><use href="#tick" transform="translate(824.500 398.500) rotate(90)"/><use href="#tick" transform="translate(885.500 288.500) rotate(90)"/><use href="#tick" transform="translate(885.500 435.500) rotate(90)"/><use href="#tick" transform="translate(824.500 452.500) rotate(90)"/><use href="#tick" transform="translate(824.500 486.500) rotate(90)"/><use href="#tick" transform="translate(959.500 266.500) rotate(90)"/><use href="#tick" transform="translate(959.500 435.500) rotate(90)"/><use href="#tick" transform="translate(1026.500 263.500) rotate(90)"/><use href="#tick" transform="translate(1026.500 435.500) rotate(90)"/><use href="#tick" transform="translate(1239.500 435.500) rotate(90)"/><use href="#tick" transform="translate(1239.500 620.500) rotate(90)"/><use href="#tick" transform="translate(1144.500 486.500) rotate(90)"/><use href="#tick" transform="translate(1144.500 587.500) rotate(90)"/><use href="#tick" transform="translate(1010.500 587.500) rotate(90)"/><use href="#tick" transform="translate(1010.500 620.500) rotate(90)"/>
            <use href="#tick" transform="translate(746 314) rotate(36)"/><use href="#tick" transform="translate(846 387) rotate(36)"/><use href="#tick" transform="translate(697 363) rotate(36)"/><use href="#tick" transform="translate(830 462) rotate(36)"/><use href="#tick" transform="translate(832 295) rotate(-28)"/><use href="#tick" transform="translate(865 277) rotate(-28)"/>
          </g>
          <path class="leader" d="M1046.500 196 1013 263"/>
          <path class="hook" d="m797 372 54 40M795 374l4-4M849 414l4-4M1194.500 304v135M1192 304.500h5M1192 438.500h5M1201 330.500h2.500v106M1160 378.500h2.500v108h-2M1208 378.500h2.500v108h-2M947.500 462v4M947 464.500h30.500v-20"/>
          <path class="tag" d="M798 370l8 3M1190 370.500h4M1190 373.500h4M1197.500 382h4M1197.500 385h4M1156 416h4M1156 419h4M1204.500 431h4M1204.500 434h4M1111 196.500h8M1122 196.500h3M1128 196.500h8M1146 196.500h2"/>
          <path class="clip" d="M1050 196.500h12M1064 196.500h8M1078 196.500h4M1086 196.500h13"/>
          <g class="nums"><text x="720" y="300">100</text><text x="683" y="337">100</text><text x="757" y="324">30</text><text x="799" y="348">372</text><text x="758" y="421">500</text><text x="818" y="356">270</text><text x="845" y="283">115</text><text x="892" y="365">437</text><text x="922" y="418">300</text><text x="818" y="472">100</text><text x="998" y="509">950</text><text x="952" y="354">502</text><text x="991" y="247">120</text><text x="1033" y="352">512</text><text x="1119" y="418">630</text><text x="1245" y="531">550</text><text x="1138" y="539">300</text><text x="1090" y="570">400</text><text x="1003" y="607">100</text></g>
          <text class="tagtext" x="964" y="461">120</text>
        </svg>
        <div class="snaps">
          <button class="tool on"><svg class="i16"><use href="#ortho"/></svg>正交</button>
          <button class="tool"><svg class="i16"><use href="#dyn"/></svg>动态输入</button>
          <button class="tool gapl"><svg class="i16"><use href="#perp"/></svg>垂点</button>
          <button class="tool on"><svg class="i16"><use href="#mid"/></svg>中点</button>
        </div>
      </div>
      <div class="status dstatus"><span class="xy">(X: 61 Y: 704)</span><span class="fill">选择钢筋进行编辑，选择标注进行修改或移动;<svg class="grip" viewBox="0 0 11 11"><path d="M8 0h2v2H8zM4 4h2v2H4zM8 4h2v2H8zM0 8h2v2H0zM4 8h2v2H4zM8 8h2v2H8z" fill="#b4b4b4"/></svg></span></div>
    </div>
  </section>
</main>

<footer class="status">
  <span class="s1"></span><span class="s2">层高:<kbd>3.55m</kbd></span><span class="s3">底标高:<kbd>-3.58m</kbd></span><span class="s4"><kbd>0</kbd></span><span class="fill">名称在当前层当前构件类型下不允许重名</span>
</footer>
<div class="ime">
  <svg class="logo"><use href="#sogou"/></svg>
  <b>英</b>
  <svg class="i16" viewBox="0 0 16 16"><circle cx="4" cy="6" r="2" fill="#1b7acb"/><path d="M10 9h3v2q0 2-2.500 3l1-2.500H10z" fill="#1b7acb"/></svg>
  <svg class="i16" viewBox="0 0 16 16"><rect x="5.500" y="0" width="5" height="9" rx="2.500" fill="#1b7acb"/><path d="M3 6q0 5 5 5t5-5M8 11v4M5 15h6" fill="none" stroke="#1b7acb" stroke-width="1.500"/></svg>
  <svg class="i16" viewBox="0 0 16 16"><rect y="2" width="16" height="12" rx="1" fill="#1b7acb"/><path d="M2 5h12M2 8h12" stroke="#fff" stroke-width="1.600" stroke-dasharray="2 1"/><path d="M4 11.500h8" stroke="#fff" stroke-width="1.500"/></svg>
  <svg class="i16" viewBox="0 0 16 16"><circle cx="6" cy="4" r="3" fill="#b4c0d4"/><path d="M0 14q0-6 6-6 4 0 4 2H7v4z" fill="#b4c0d4"/><path d="M8.500 9v6M15 9.500h-3.500v5h3V12H12" fill="none" stroke="#b4c0d4" stroke-width="1.400"/></svg>
  <svg class="i16" viewBox="0 0 16 16"><path d="M5 1q3 2 6 0l5 3-2 4-2-1v8H4V7L2 8 0 4z" fill="#1b7acb"/></svg>
  <svg class="i16" viewBox="0 0 16 16"><path d="M15 4.500A4.500 4.500 0 0 1 9 9.500L3.500 15 1 12.500l5.500-5.500A4.500 4.500 0 0 1 11.500 1L9.500 3.500l.5 2.500 2.500.5z" fill="#1b7acb"/></svg>
</div>

<footer class="taskbar">
  <button class="start" aria-label="开始"><svg viewBox="0 0 16 16"><path d="m0 2.300 6.500-.9v6H0zM7.400 1.200 16 0v7.400H7.400zM0 8.400h6.500v6.200L0 13.700zM7.400 8.400H16V16l-8.600-1.200z" fill="#fff"/></svg></button>
  <label class="cortana"><svg class="ring" viewBox="0 0 22 22"><circle cx="11" cy="11" r="9" fill="none" stroke="#eee" stroke-width="3"/></svg><input type="text" placeholder="在这里输入你要搜索的内容" aria-label="搜索"><svg class="mic" viewBox="0 0 12 16"><path d="M3.500.500h5v10h-5zM.5 8v5h11V8M6 13v3M3.500 15.500h5" fill="none" stroke="#aaa"/></svg></label>
  <div class="apps">
    <button aria-label="花瓣"><svg viewBox="0 0 24 24"><g fill="#e6e6e6"><path d="M12 12Q1 13 2 6t10-4q-4 4 0 10z"/><path d="M12 12Q11 1 18 2t4 10q-4-4-10 0z"/><path d="M12 12q11-1 10 6t-10 4q4-4 0-10z"/><path d="M12 12q1 11-6 10T2 12q4 4 10 0z"/></g></svg></button>
    <button aria-label="旋风"><svg viewBox="0 0 24 24"><path d="M21 3q-7 1-10 0-7 2-7 9 1 9 9 8 7-1 7-7-2-5-7-5-5 1-4 5 2 4 5 2 3-2 0-3M18 7Q9 3 7 11q-1 7 6 8" fill="none" stroke="#c9cdce" stroke-width="1.400"/></svg></button>
    <i class="bars2"></i>
    <button aria-label="Edge"><svg viewBox="0 0 24 24"><path d="M2 11Q3 2 12 1.500 22 2 22 11v3H8.500q1 4.500 6 4.500 3.500 0 6-1.500v4q-3 1.500-7 1.500-9-.5-9.500-8.500Q4 8.500 10 6.500 5 7 2 11zm6.500-.5H16q0-4-3.500-4-3.500.5-4 4z" fill="#0a7bdc"/></svg></button>
    <button aria-label="商店"><svg viewBox="0 0 24 24"><path d="M2 7h20l-1 15L3 21z" fill="#fff"/><path d="M8 7q0-6 4-5.500T16 7M6 6q1-6 5-5" fill="none" stroke="#fff" stroke-width="1.500"/><path d="m6 10 5-.5V14H6zM12 9.500l6-.5v5h-6zM6 15h5v4.500L6 19zM12 15h6v5l-6-.5z" fill="#000b10"/></svg></button>
    <button aria-label="资源管理器"><svg viewBox="0 0 24 24"><path d="M1 3h8l1 2h12v15H1z" fill="#f5c857"/><path d="M1 7h21v14H1z" fill="#ffe398"/><path d="M5 21v-7h14v7h-3v-3H8v3z" fill="#35a9e2"/></svg></button>
    <button class="run" aria-label="广联达G"><svg viewBox="0 0 24 24"><path d="M24 1q-3 5-9 5-7 0-7 7 1 5 5 5 3 0 3-3 0-2-4-2 4-4 9-2 3 3 0 8-4 6-11 4Q1 20 1 12q0-3 2-5l-1-2q3 0 4-2 5-3 9-1 5 1 9-1z" fill="#1597ea"/></svg></button>
    <button class="run" aria-label="360浏览器"><svg viewBox="0 0 24 24"><circle cx="12" cy="13" r="9.500" fill="#58b82c" stroke="#eafbe0" stroke-width="1.500"/><path d="M7 13.500h10.500Q18 8 12.500 7.500 7 8 7 13.500q1 5.500 6 5 3 0 4-2" fill="none" stroke="#fff" stroke-width="2.800"/><path d="M15 4q4-1 6-4-1 5-3 7z" fill="#58b82c"/></svg></button>
    <button class="run" aria-label="记事"><svg viewBox="0 0 24 24"><rect width="24" height="24" rx="2" fill="#f09a1c"/><path d="m3 5 14-2 2 16-13 3z" fill="#fff6dc"/><path d="m6 9 8-1M6 12l9-1M7 15l8-1M7 18l8-1" stroke="#c58a3c"/><path d="m23 2-9 12-1 3 3-2 8-11z" fill="#9c3d12"/></svg></button>
    <button class="run active" aria-label="广联达BIM"><svg viewBox="0 0 24 24"><use href="#app"/></svg></button>
  </div>
  <div class="tray">
    <svg viewBox="0 0 16 16"><path d="m2 11 6-6 6 6" fill="none" stroke="#fff" stroke-width="1.300"/></svg>
    <svg viewBox="0 0 16 16"><path d="M4.500 5.500h10v7h-8M15.500 7.500v3" fill="none" stroke="#fff"/><path d="M7 7h6v4H7zM0 4h5v3L3.500 8.500V12h-1V8.500L0 7zM1 2h1v2H1zM3.500 2h1v2h-1z" fill="#fff"/></svg>
    <svg viewBox="0 0 16 16"><path d="M2 15Q2 5 13 3M5 15q0-6 8-8M8 15q0-3 5-4.500" fill="none" stroke="#ccc" stroke-width="1.300"/><circle cx="12" cy="14" r="1.500" fill="#fff"/></svg>
    <svg viewBox="0 0 16 16"><path d="M1 5.500h3l4-4v13l-4-4H1z" fill="none" stroke="#fff"/><path d="M10 6q1.500 2 0 4M12 4q3 4 0 8M14 2.500q4 5.500 0 11" fill="none" stroke="#bbb"/></svg>
    <b>中</b>
    <svg class="i16"><use href="#sogou"/></svg>
  </div>
  <time datetime="2017-07-18T20:38"><span>20:38</span><span>2017/7/18</span></time>
  <button class="note" aria-label="通知"><svg viewBox="0 0 16 16"><path d="M.5.500h15v12h-5L8 15l-2.500-2.500h-5z" fill="none" stroke="#fff" stroke-width="1.200"/></svg></button>
</footer>
</body>
</html>
```

FILE: styles.css
```css
* { box-sizing: border-box; }
body {
  margin: 0;
  height: 100vh;
  display: flex;
  flex-direction: column;
  overflow: hidden;
  background: #f0f0f0;
  color: #000;
  font: 12px/16px "Open Sans", "Noto Sans CJK SC", sans-serif;
  position: relative;
}
button, input, select { font: inherit; color: inherit; }
button { border: 0; padding: 0; background: none; white-space: nowrap; }
select { appearance: none; border: 0; padding: 0; background: none; }
svg { display: block; flex: none; }
h1, h2 { margin: 0; font: inherit; }
ul { margin: 0; padding: 0; list-style: none; }
kbd { font: 10px/16px "Liberation Mono", monospace; }
.defs { position: absolute; width: 0; height: 0; }
.i16 { width: 16px; height: 16px; }
.caret { width: 7px; height: 4px; margin-left: 2px; }
.more { width: 9px; height: 7px; margin-left: auto; align-self: flex-start; }
.sep { width: 1px; height: 22px; background: #a8a8a8; flex: none; }
.off { color: #838383; }

/* title bar */
.titlebar { flex: none; height: 23px; display: flex; align-items: center; gap: 5px; padding-left: 2px; background: #fff; color: #999; }
.titlebar h1 { flex: 1; white-space: nowrap; font-family: Inter, "Noto Sans CJK SC", sans-serif; }
.winbtns { display: flex; }
.winbtns button { width: 46px; height: 22px; display: grid; place-items: center; }
.winbtns svg { width: 10px; height: 10px; fill: none; stroke: #888; }
.ball {
  position: absolute; z-index: 5; top: -28px; right: 138px; width: 48px; height: 48px;
  border-radius: 50%; border: 3px solid #d8d8d8; background: #44c767; box-shadow: inset 0 0 0 1px #2a9850, 0 2px 5px #0006;
  color: #fff; font: bold 12px/14px "Open Sans", sans-serif; text-align: center; padding-top: 25px;
}

/* menus and toolbars */
.menubar { flex: none; height: 30px; display: flex; align-items: center; }
.menus { display: flex; gap: 11px; padding-left: 7px; }
.tool { display: inline-flex; align-items: center; gap: 4px; height: 24px; }
.extras { display: flex; gap: 5px; padding: 0 6px 0 17px; }
.notice { flex: 0 1 188px; height: 28px; padding: 6px 28px; background: #fafafa; color: #5a2b00; text-decoration: none; white-space: nowrap; }
.account { flex: 1; height: 28px; display: flex; align-items: center; gap: 7px; padding: 0 4px; margin-left: 2px; background: #fafafa; }
.account .more { margin-top: 5px; }
.toolbars { flex: none; height: 30px; display: flex; gap: 3px; }
.bar { display: flex; align-items: center; gap: 7px; background: linear-gradient(#fcfcfc, #f1f1f1); border-radius: 3px; }
.toolbars .bar { height: 29px; padding: 0 4px; }
.toolbars .more { margin-top: 5px; color: #000; }
.files { flex: 0 0 150px; }
.toolbars .files { padding-right: 2px; }
.edit { flex: 0 0 548px; }
.view { flex: 1; }
.toolbars .view { padding: 0 4px 0 1px; }
.sep + .tool { margin-left: -2px; }
.view .sep + .tool { margin-left: -4px; }
.view .tool + .sep { margin-left: -1px; }
.dimpick { display: flex; align-items: center; gap: 3px; height: 23px; padding: 0 3px; border: 1px solid #707070; margin-right: -2px; }
.dimpick select { width: 24px; }
.dimpick .caret { margin-left: 0; }
.tight { gap: 3px; }
.tight .caret { margin-left: 0; }

/* work area */
.work { flex: 1; min-height: 0; display: flex; gap: 6px; position: relative; }
.nav { flex: 0 0 165px; display: flex; flex-direction: column; padding: 1px 0 0; }
.navhead { flex: none; display: flex; align-items: center; gap: 10px; height: 15px; border: 1px solid #777; border-left: 0; padding-right: 4px; font-size: 13px; margin-bottom: 1px; }
.navhead span { flex: 1; }
.navhead svg { width: 8px; height: 9px; }
.navbtn { flex: none; height: 23px; border: 1px solid #a0a0a0; border-bottom-color: #b8b8b8; background: #f0f0f0; }
.navtools { flex: none; display: flex; gap: 5px; align-items: center; height: 26px; padding-left: 6px; background: linear-gradient(#fff, #ececec); border: 1px solid #bbb; }
.navtools svg { width: 18px; height: 16px; }
.treebox { flex: 1; min-height: 0; display: flex; flex-direction: column; margin: 0 1px 1px 2px; border: 1px solid #828790; background: #fff; }
.treemain { flex: 1; min-height: 0; display: flex; }
.tree { flex: 1; min-width: 0; overflow: hidden; padding-top: 2px; }
.cat { display: flex; align-items: center; height: 16px; padding-left: 7px; gap: 6px; }
.exp { width: 10px; height: 6px; }
.exp + .i16 { margin-right: -1px; }
.shut { height: 10px; opacity: .6; }
.kids { padding-left: 31px; background: repeating-linear-gradient(#888 0 1px, transparent 1px 2px) 12px 0 / 1px 100% no-repeat; }
.kids.last { background: none; }
.kids li { display: flex; align-items: center; height: 16px; white-space: nowrap; }
.kids li::before, .items li::before {
  content: ""; flex: none; width: 10px; height: 16px; margin-right: 1px;
  background:
    repeating-linear-gradient(#888 0 1px, transparent 1px 2px) 0 0 / 1px 100% no-repeat,
    repeating-linear-gradient(90deg, #888 0 1px, transparent 1px 2px) 0 8px / 100% 1px no-repeat;
}
.kids li:last-child::before, .items li:last-child::before {
  background-size: 1px 8px, 100% 1px;
}
.kids li .i16 { margin-right: 4px; }
.kids .cur span { display: flex; background: #d9d9d9; }
.book { width: 13px; height: 14px; margin-left: 1px; }
.vscroll { flex: none; width: 16px; display: flex; flex-direction: column; align-items: center; justify-content: space-between; background: #f0f0f0; padding: 6px 0; }
.vscroll svg { width: 10px; height: 6px; }
.vscroll i { width: 15px; background: #cdcdcd; }
.nav-v i { flex: 0 1 55%; margin-top: auto; margin-bottom: 5px; }
.list-v i { flex: 0 1 88%; margin-top: auto; margin-bottom: 6px; }
.grid-v i { flex: 0 0 69%; margin-bottom: auto; margin-top: 2px; }
.hscroll { flex: none; height: 16px; display: flex; align-items: center; gap: 6px; padding-left: 6px; margin-right: 16px; background: #f0f0f0; }
.hscroll svg { width: 6px; height: 10px; }
.hscroll i { width: 102px; height: 15px; background: #cdcdcd; margin-right: 5px; }

.doc { flex: 1; min-width: 0; display: flex; flex-direction: column; }
.comps { flex: none; height: 28px; padding-left: 4px; margin-top: 1px; }
.comps .sep { height: 16px; margin-left: -2px; }
.floor { display: flex; align-items: center; gap: 6px; margin-left: -4px; }
.floor select { width: 120px; height: 22px; padding-left: 2px; background: #fff; }
.panes { flex: 1; min-height: 0; display: flex; gap: 3px; }
.list { flex: 0 0 184px; display: flex; flex-direction: column; }
.search { flex: none; height: 30px; display: flex; align-items: center; gap: 5px; padding: 0 1px; background: #fff; }
.search input { width: 157px; height: 23px; border: 1px solid #6e6e6e; padding: 0 2px; margin-top: 2px; }
.search input::placeholder { color: #777; opacity: 1; }
.items { flex: 1; min-height: 0; display: flex; border: 1px solid #828790; border-top-width: 2px; border-right-width: 2px; background: #fff; margin-bottom: 2px; }
.items ul { flex: 1; padding: 1px 0 0 32px; overflow: hidden; }
.items li { display: flex; align-items: center; height: 16px; font: 10px/16px "Liberation Mono", monospace; }
.items li svg { width: 12px; height: 12px; margin: 0 6px 0 1px; }
.items .cur span { display: flex; align-items: center; height: 16px; background: #316ac5; padding-right: 5px; }
.props { flex: 1; min-width: 0; display: flex; flex-direction: column; }
.tabs { display: flex; align-items: flex-end; flex: none; }
.tab { border: 1px solid #d5d5d5; border-bottom: 0; background: #f0f0f0; padding: 1px 7px; height: 18px; }
.tab.on { background: #fff; height: 21px; }
.props .tabs { background: #fff; border-bottom: 1px solid #d9d9d9; margin-right: 3px; }
.grid { flex: 1; min-height: 0; display: flex; background: #fff; border: 1px solid #a0a0a0; margin: 2px 5px 4px 4px; }
.grid table { flex: 1; border-collapse: collapse; table-layout: fixed; align-self: flex-start; }
.grid th, .grid td { height: 19px; padding: 0; border-right: 1px solid #c0c0c0; border-bottom: 1px solid #c0c0c0; font-weight: 400; line-height: 16px; text-align: left; }
.grid thead th, .grid thead td { height: 24px; background: linear-gradient(#fff, #f0f0f0); }
.grid th { width: 22px; text-align: center; background: #f6f6f6; }
.grid td:nth-child(2) { width: 180px; padding-left: 19px; }
.grid .grp td:nth-child(2) { padding-left: 1px; }
.grid .cur td:nth-child(2) { background: #39f; color: #fff; }
.grid .cur th { background: #ffd38a; color: #6a2340; }
.key td { color: #00f; }
.dim td { color: #808080; }
.grid td button { width: 13px; height: 13px; border: 1px solid #bbb; color: #000; line-height: 9px; margin-right: 5px; vertical-align: middle; }

/* section editor window */
.dialog { position: absolute; z-index: 2; left: 454px; right: 22px; top: 0; bottom: 4px; display: flex; flex-direction: column; padding: 0 7px 6px; background: linear-gradient(#99b4d1, #b9d1ea 30px); border: 1px solid #222; border-top-color: #fff; box-shadow: inset -1px -1px 0 #4fd0ee; }
.dialog h2 { flex: none; height: 29px; line-height: 35px; }
.client { flex: 1; min-height: 0; display: flex; flex-direction: column; background: #f0f0f0; }
.dtabs { padding-left: 2px; }
.dtabs .tab + .tab { margin-left: -1px; }
.dtabs .tab.on { padding-bottom: 2px; padding-right: 12px; padding-left: 8px; }
.dtabs .tab:first-child { padding: 0 9px 0 6px; }
.page { flex: 1; min-height: 0; display: flex; flex-direction: column; margin: 0 2px 3px 1px; border: 1px solid #d9d9d9; outline: 1px solid #fff; outline-offset: -2px; padding: 3px 2px 2px 3px; }
.page .bar { flex: none; align-self: flex-start; height: 28px; padding: 0 6px; }
.page .tool { justify-content: center; }
.page .row1 .caret { margin-left: 4px; }
.page .sep + .tool { margin-left: 0; }
.row1 .tool + .sep { margin-right: -2px; }
.row1 .sep + .tool.on { margin-left: -3px; }
.row1 .tool.on + .tool { margin-left: -4px; }
.tool.on { border: 1px solid #39f; background: #e5eef8; padding: 0 3px; }
.combo { display: flex; align-items: center; width: 77px; height: 24px; background: #fff; padding-left: 5px; margin: 0 -2px 0 -4px; }
.combo select { flex: 1; min-width: 0; }
.row2 .sep { margin-right: -4px; }
.row2 .tool.on { margin-left: -7px; padding: 0 4px; }
.row2 .tool.on + .tool { margin-left: -2px; }
.canvas { flex: 1; min-height: 0; width: 100%; border: 2px solid #f00; background: #14171e; }
.snaps { flex: none; height: 28px; display: flex; align-items: center; gap: 3px; padding-left: 1px; }
.snaps .gapl { margin-left: 8px; }
.axisbase { stroke: #000; fill: none; }
.axis { stroke: #303743; fill: none; stroke-dasharray: 9 4; }
.axistick { stroke: #303743; fill: none; }
.axistext { fill: #343b46; font: 12px "Liberation Mono", monospace; text-anchor: end; }
.cover { stroke: #9fc4ec; fill: none; stroke-dasharray: 4 3; }
.outline { stroke: #f4f4f4; stroke-width: 2; fill: none; }
.bars { stroke: #c8181e; stroke-width: 3; fill: none; }
.bars .thick { stroke-width: 4; }
.dots { stroke: #f2e02c; fill: none; stroke-width: 1; }
.dims { stroke: #7cc36a; fill: none; }
.leader { stroke: #777; stroke-dasharray: 3 2; }
.hook { stroke: #fff; fill: none; }
.tag { stroke: #0f2; stroke-width: 2; fill: none; }
.clip { stroke: #bbb; }
.nums, .tagtext { fill: #fff; font: 600 7px "Open Sans", sans-serif; text-anchor: middle; }
.tagtext { fill: #0f2; font-size: 5px; }

/* status bars */
.status { flex: none; display: flex; gap: 2px; height: 22px; }
.status > span { border: 1px solid #d4d4d4; background: linear-gradient(#fff, #f1f1f1); padding: 2px 1px; white-space: nowrap; overflow: hidden; }
.status .fill { flex: 1; }
.dstatus > span { padding: 2px; }
.xy { width: 97px; }
.dstatus .fill { display: flex; justify-content: space-between; align-items: flex-end; }
.grip { width: 11px; height: 11px; }
.s1 { width: 148px; }
.s2 { width: 78px; }
.s3 { width: 98px; }
.s4 { width: 48px; }

.ime { position: absolute; z-index: 4; right: 0; bottom: 40px; height: 26px; display: flex; align-items: center; gap: 6px; padding: 0 4px 0 0; background: #fff; border: 1px solid #d5e2ee; }
.ime .logo { width: 28px; height: 27px; }
.ime b { font-size: 15px; color: #1b7acb; }

/* task bar */
.taskbar { flex: none; height: 40px; display: flex; background: #000b10; color: #fff; }
.start { width: 48px; display: grid; place-items: center; background: #000; }
.start svg { width: 16px; height: 16px; }
.cortana { flex: 0 1 344px; display: flex; align-items: center; gap: 5px; padding: 0 14px 0 9px; background: #333; }
.ring { width: 22px; height: 22px; }
.cortana input { flex: 1; min-width: 0; border: 0; padding: 0; background: none; font-size: 14px; }
.cortana input::placeholder { color: #9c9c9c; opacity: 1; }
.mic { width: 12px; height: 16px; }
.apps { display: flex; padding-left: 2px; }
.apps button { width: 48px; margin-right: 1px; height: 40px; display: grid; place-items: center; }
.apps svg { width: 24px; height: 24px; }
.apps .run { background: linear-gradient(#76b9ed, #76b9ed) center bottom / 40px 2px no-repeat; }
.apps .run.active { background: linear-gradient(#76b9ed, #76b9ed) center bottom / 48px 2px no-repeat #343d42; }
.bars2 { width: 4px; height: 16px; margin: 12px 13px 0 8px; border: solid #333c40; border-width: 0 1px; }
.tray { margin: 0 8px 0 auto; display: flex; align-items: center; gap: 8px; }
.tray svg { width: 16px; height: 16px; }
.tray b { font-size: 14px; font-weight: 500; }
.tray .i16 { margin-left: 5px; }
time { display: flex; flex-direction: column; justify-content: center; align-items: center; line-height: 19px; width: 80px; }
.note { width: 32px; margin-right: 17px; display: grid; place-items: center; }
.note svg { width: 16px; height: 16px; }
```
